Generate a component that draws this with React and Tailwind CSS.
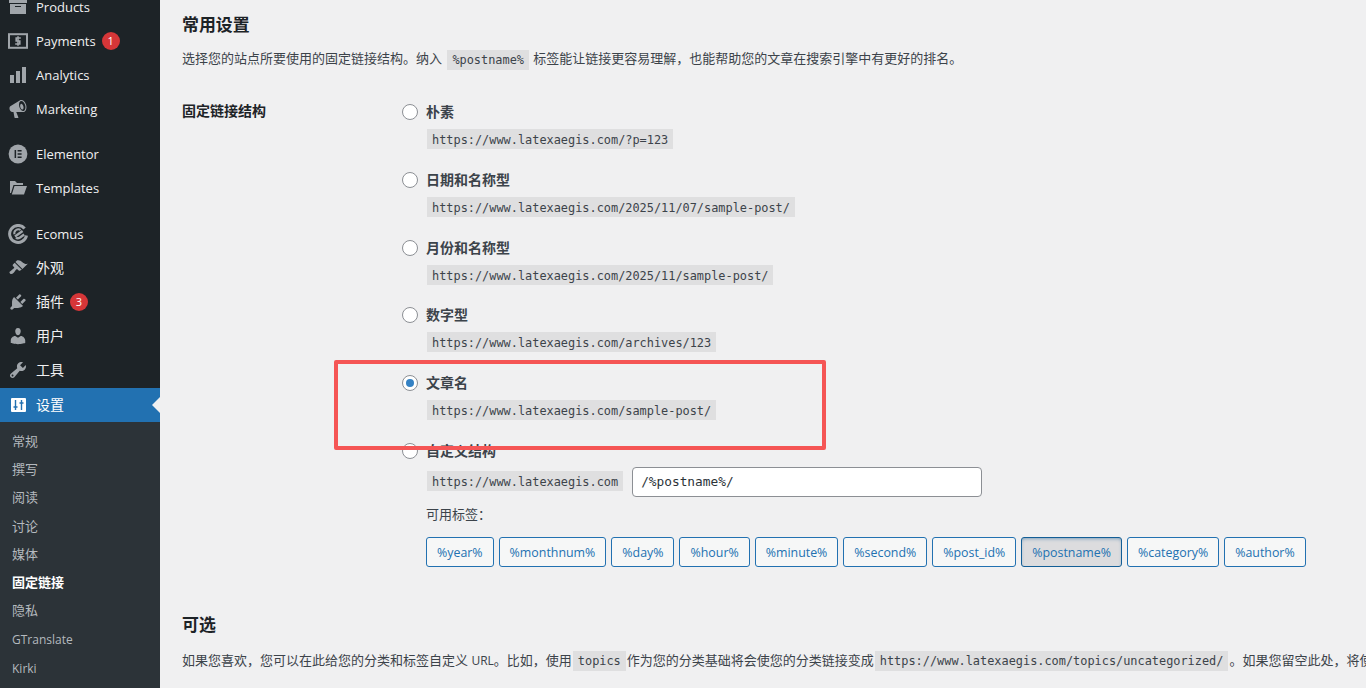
import React from "react";

const SANS = `font-["Open_Sans","Noto_Sans_CJK_SC",sans-serif]`;

function DashIcon({ d }) {
    return (
        <svg viewBox="0 0 20 20" className="w-5 h-5 shrink-0 fill-[#a0a5aa]">
            <path d={d} fillRule="evenodd" />
        </svg>
    );
}

const icons = {
    products: "M19 3v3H1V3h18zM2 7h16v10H2V7zm11 3V9H7v1h6z",
    analytics: "M2 10h4v8H2zM8 6h4v12H8zM14 2h4v16h-4z",
    marketing: "M18.15 5.94c.46 1.62.38 3.22-.02 4.48-.42 1.28-1.26 2.18-2.3 2.48-.16.06-.26.06-.4.06-.06.02-.12.02-.18.02-.06.02-.14.02-.22.02h-6.8l2.22 5.5c.02.14-.06.26-.14.34-.08.1-.24.16-.34.16H6.95c-.1 0-.26-.06-.34-.16-.08-.08-.16-.2-.14-.34l-1-5.5H4.25l-.02-.02c-.5.06-1.08-.18-1.54-.62s-.88-1.08-1.06-1.88c-.24-.8-.2-1.56-.02-2.2.18-.62.58-1.08 1.06-1.3l.02-.02 9-5.4c.1-.06.18-.1.24-.16.06-.04.14-.08.24-.12.16-.08.28-.12.5-.18 1.04-.3 2.24.1 3.22.98s1.76 2.18 2.26 3.86zm-2.58 5.98h-.02c.4-.1.74-.34 1.04-.7.58-.7.86-1.76.86-3.04 0-.64-.1-1.3-.28-1.98-.34-1.36-1.02-2.5-1.78-3.24s-1.68-1.1-2.46-.88c-.82.22-1.4.96-1.7 2-.32 1.04-.28 2.36.06 3.72.38 1.36 1 2.5 1.8 3.24.78.74 1.62 1.1 2.48.88zm-2.54-7.08c.22-.04.42-.02.62.04.38.16.76.48 1.1 1s.58 1.14.7 1.84c.14.7.12 1.32-.02 1.86-.14.52-.42.88-.8 1-.2.06-.4.06-.6-.02-.38-.12-.76-.44-1.1-.98s-.58-1.16-.7-1.86c-.14-.7-.1-1.3.02-1.84.14-.52.42-.88.78-1.04z",
    templates: "M2 3h5l2 2h6v2H5.5L3 15H2V3zM6.5 8H19l-3 8.5H3.8L6.5 8z",
    appearance: "M14.48 11.06L7.41 3.99l1.5-1.5c.5-.56 2.3-.47 3.51.32 1.21.8 1.43 1.28 2.91 2.1 1.18.64 2.45 1.26 4.45.85zm-.71.71L6.7 4.7 4.93 6.47c-.39.39-.39 1.02 0 1.41l1.06 1.06c.39.39.39 1.03 0 1.42-.6.6-1.43 1.11-2.21 1.69-.35.26-.7.53-1.01.84C1.43 13.23.99 14.4 2 15.41c1.01 1.01 2.35.56 3.69-.77.31-.31.58-.66.84-1.01.58-.78 1.09-1.61 1.69-2.21.39-.39 1.03-.39 1.42 0l1.06 1.06c.39.39 1.02.39 1.41 0z",
    plugins: "M13.11 4.36L9.87 7.6 8 5.73l3.24-3.24c.35-.34 1.05-.2 1.56.32.52.51.66 1.21.31 1.55zm-8 1.77l.91-1.12 9.01 9.01-1.19.84c-.71.71-2.63 1.16-3.82 1.16H6.14L4.9 17.26c-.59.59-1.54.59-2.12 0-.59-.58-.59-1.53 0-2.12l1.24-1.24v-3.88c0-1.13.4-3.19 1.09-3.89zm7.26 3.97l3.24-3.24c.34-.35 1.04-.21 1.55.31.52.51.66 1.21.31 1.55l-3.24 3.25z",
    users: "M10 9.25c-2.27 0-2.73-3.44-2.73-3.44C7 4.02 7.82 2 9.97 2c2.16 0 2.98 2.02 2.71 3.81 0 0-.41 3.44-2.68 3.44zm0 2.57L12.72 10c2.39 0 4.52 2.33 4.52 4.53v2.49s-3.65 1.13-7.24 1.13c-3.65 0-7.24-1.13-7.24-1.13v-2.49c0-2.25 1.94-4.48 4.47-4.48z",
    tools: "M16.68 9.77c-1.34 1.34-3.3 1.67-4.95.99l-5.41 6.52c-.99.99-2.59.99-3.58 0s-.99-2.59 0-3.57l6.52-5.42c-.68-1.65-.35-3.61.99-4.95 1.28-1.28 3.12-1.62 4.72-1.06l-2.89 2.89 2.82 2.82 2.86-2.87c.53 1.58.18 3.39-1.08 4.65zM3.81 16.21c.4.39 1.04.39 1.43 0 .4-.4.4-1.04 0-1.43-.39-.4-1.03-.4-1.43 0-.39.39-.39 1.03 0 1.43z",
};

function MoneyIcon() {
    return (
        <svg viewBox="0 0 20 20" className="w-5 h-5 shrink-0">
            <rect x="1" y="3.2" width="18" height="13.6" fill="none" stroke="#a0a5aa" strokeWidth="2" />
            <path d="M12.8 7H8.2v3h3.6v3H7.2M10 5.2v9.6" fill="none" stroke="#a0a5aa" strokeWidth="1.6" />
        </svg>
    );
}

function ElementorIcon() {
    return (
        <svg viewBox="0 0 20 20" className="w-5 h-5 shrink-0">
            <circle cx="10" cy="10" r="9.4" fill="#a0a5aa" />
            <path d="M6.6 6h1.5v8H6.6zM9.6 6h4v1.5h-4zM9.6 9.2h4v1.5h-4zM9.6 12.5h4V14h-4z" fill="#1d2327" />
        </svg>
    );
}

function EcomusIcon() {
    return (
        <svg viewBox="0 0 20 20" className="w-5 h-5 shrink-0">
            <path d="M16.6 4.4A8.5 8.5 0 1 0 18.5 11.5" fill="none" stroke="#a0a5aa" strokeWidth="3" />
            <path d="M7 12.4L14.6 7M8 13.6c1.2.9 2.8.6 4-.2L16.2 10.4" fill="none" stroke="#a0a5aa" strokeWidth="2.4" />
            <path d="M6.4 10.2A4 4 0 0 1 12.6 6" fill="none" stroke="#a0a5aa" strokeWidth="2" />
        </svg>
    );
}

function SettingsIcon() {
    return (
        <svg viewBox="0 0 20 20" className="w-5 h-5 shrink-0">
            <rect x="3" y="3" width="15" height="14" rx="1" fill="#fff" />
            <path d="M7.5 5v10M5.5 12h4M13.5 5v10M11.5 8h4" fill="none" stroke="#2271b1" strokeWidth="1.4" />
        </svg>
    );
}

const topGroups = [
    [
        { label: "Products", icon: <DashIcon d={icons.products} /> },
        { label: "Payments", icon: <MoneyIcon />, badge: 1 },
        { label: "Analytics", icon: <DashIcon d={icons.analytics} /> },
        { label: "Marketing", icon: <DashIcon d={icons.marketing} /> },
    ],
    [
        { label: "Elementor", icon: <ElementorIcon /> },
        { label: "Templates", icon: <DashIcon d={icons.templates} /> },
    ],
    [
        { label: "Ecomus", icon: <EcomusIcon /> },
        { label: "外观", icon: <DashIcon d={icons.appearance} />, cjk: true },
        { label: "插件", icon: <DashIcon d={icons.plugins} />, badge: 3, cjk: true },
        { label: "用户", icon: <DashIcon d={icons.users} />, cjk: true },
        { label: "工具", icon: <DashIcon d={icons.tools} />, cjk: true },
    ],
];

const subItems = ["常规", "撰写", "阅读", "讨论", "媒体", "固定链接", "隐私", "GTranslate", "Kirki"];

const options = [
    { label: "朴素", url: "https://www.latexaegis.com/?p=123" },
    { label: "日期和名称型", url: "https://www.latexaegis.com/2025/11/07/sample-post/" },
    { label: "月份和名称型", url: "https://www.latexaegis.com/2025/11/sample-post/" },
    { label: "数字型", url: "https://www.latexaegis.com/archives/123" },
    { label: "文章名", url: "https://www.latexaegis.com/sample-post/", checked: true },
];

const tags = ["%year%", "%monthnum%", "%day%", "%hour%", "%minute%", "%second%", "%post_id%", "%postname%", "%category%", "%author%"];

function Code({ children, className = "leading-[21px]" }) {
    return (
        <code className={`inline-block h-5 px-[5px] mx-px bg-[#dfdfe0] text-[#3c434a] text-[11.9px] align-middle font-["DejaVu_Sans_Mono",monospace] ${className}`}>
            {children}
        </code>
    );
}

function Radio({ checked }) {
    return (
        <span className="w-4 h-4 shrink-0 rounded-full border border-[#8c8f94] bg-white flex items-center justify-center">
            {checked && <span className="w-2 h-2 rounded-full bg-[#3582c4]" />}
        </span>
    );
}

function Sidebar() {
    return (
        <aside className="w-40 shrink-0 bg-[#1d2327] h-full overflow-hidden text-[#f0f0f1]">
            <div className="-mt-[10px] flex flex-col">
                {topGroups.map((group, i) => (
                    <div key={i} className={i === 0 ? "" : i === 1 ? "mt-[11px]" : "mt-3"}>
                        {group.map((item) => (
                            <div key={item.label} className={`h-[34px] flex items-center pl-2 gap-2 ${item.cjk ? "text-[14px]" : "text-[13px]"}`}>
                                {item.icon}
                                <span className={item.cjk ? "-mt-[2px]" : "mt-[2px]"}>{item.label}</span>
                                {item.badge && (
                                    <span className="w-[18px] h-[18px] -ml-[2px] rounded-full bg-[#d63638] text-white text-[11px] flex items-center justify-center">
                                        {item.badge}
                                    </span>
                                )}
                            </div>
                        ))}
                    </div>
                ))}
            </div>
            <div className="relative mt-px h-[34px] bg-[#2271b1] flex items-center pl-2 gap-2 text-[14px] text-white">
                <SettingsIcon />
                <span className="-mt-[2px]">设置</span>
                <span className="absolute right-0 top-[9px] border-y-8 border-r-8 border-y-transparent border-r-[#f0f0f1]" />
            </div>
            <div className="bg-[#2c3338] pt-[6px] pb-2 text-[13px]">
                {subItems.map((item) => (
                    <div
                        key={item}
                        className={`h-[28.2px] pl-3 ${item === "固定链接" ? "text-white font-semibold" : "text-[#b4b9be]"} ${/^[A-Z]/.test(item) ? "text-[12px] leading-[30px]" : "leading-[26px]"}`}
                    >
                        {item}
                    </div>
                ))}
            </div>
        </aside>
    );
}

export default function App() {
    return (
        <div className={`relative flex w-[1366px] h-[688px] overflow-hidden bg-[#f0f0f1] ${SANS}`}>
            <Sidebar />
            <main className="flex-1 min-w-0 pl-[22px] pt-[14px] text-[13px] text-[#3c434a] whitespace-nowrap">
                <h2 className="h-[22px] leading-[22px] text-[16.9px] font-semibold text-[#1d2327]">常用设置</h2>
                <p className="mt-[10px] h-6 leading-6">
                    选择您的站点所要使用的固定链接结构。纳入 <Code className="ml-[2px] leading-[21px]">%postname%</Code> 标签能让链接更容易理解，也能帮助您的文章在搜索引擎中有更好的排名。
                </p>
                <div className="mt-[30px] flex">
                    <div className="w-[220px] shrink-0 h-6 -mt-px leading-6 text-[14px] font-semibold text-[#1d2327]">固定链接结构</div>
                    <div className="flex flex-col">
                        {options.map((opt) => (
                            <div key={opt.label} className="h-[67.75px]">
                                <div className="h-6 flex items-center gap-2 text-[14px] font-semibold">
                                    <Radio checked={opt.checked} />
                                    <span className="-mt-px">{opt.label}</span>
                                </div>
                                <div className="mt-[5px] ml-6 h-5 flex">
                                    <Code className="ml-px leading-[22px]">{opt.url}</Code>
                                </div>
                            </div>
                        ))}
                        <div className="h-6 flex items-center gap-2 text-[14px] font-semibold">
                            <Radio />
                            <span className="-mt-px">自定义结构</span>
                        </div>
                        <div className="mt-1 ml-6 flex items-center gap-2">
                            <Code className="ml-px -mt-[2px] leading-[22px]">https://www.latexaegis.com</Code>
                            <input
                                readOnly
                                value="/%postname%/"
                                className={`w-[350px] h-[30px] px-[8px] rounded-[4px] border border-[#8c8f94] bg-white text-[#2c3338] text-[12.8px] font-["DejaVu_Sans_Mono",monospace]`}
                            />
                        </div>
                        <div className="mt-[7px] ml-6 h-5 leading-5">可用标签：</div>
                        <div className="mt-[13px] ml-6 flex gap-[5px]">
                            {tags.map((tag) => (
                                <span
                                    key={tag}
                                    className={`h-[30px] leading-[30px] px-[10px] rounded-[3px] border text-[12.4px] text-[#2271b1] ${
                                        tag === "%postname%"
                                            ? "bg-[#dcdcde] border-[#135e96] shadow-[inset_0_2px_5px_-3px_#135e96]"
                                            : "bg-[#f6f7f7] border-[#2271b1]"
                                    }`}
                                >
                                    {tag}
                                </span>
                            ))}
                        </div>
                    </div>
                </div>
                <h2 className="mt-[47px] h-[22px] leading-[22px] text-[16.9px] font-semibold text-[#1d2327]">可选</h2>
                <p className="mt-3 h-6 leading-6">
                    如果您喜欢，您可以在此给您的分类和标签自定义 <span className="text-[12px]">URL</span>。比如，使用<Code>topics</Code>作为您的分类基础将会使您的分类链接变成<Code>https://www.latexaegis.com/topics/uncategorized/</Code>。如果您留空此处，将使用默认值。
                </p>
            </main>
            {/* red annotation drawn on the screenshot */}
            <div className="absolute left-[334px] top-[360px] w-[492px] h-[90px] border-4 border-[#f55555] rounded-[2px] pointer-events-none" />
        </div>
    );
}
